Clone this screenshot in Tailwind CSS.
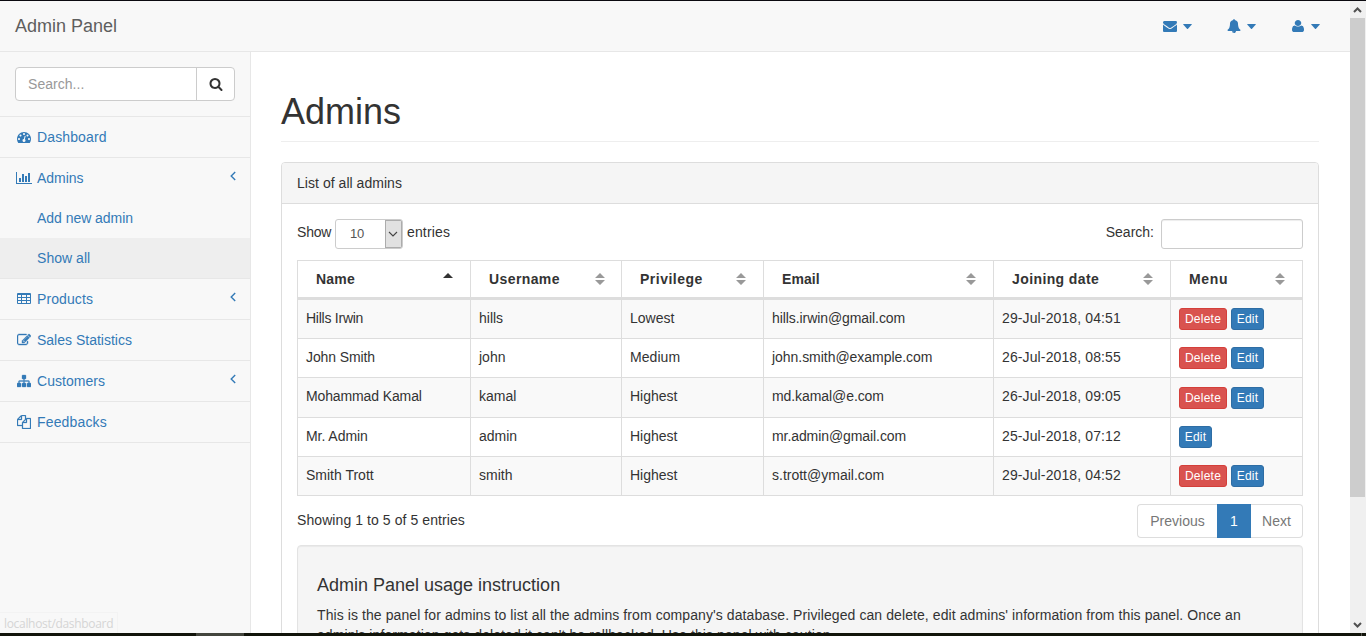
<!DOCTYPE html>
<html lang="en">
<head>
<meta charset="utf-8">
<title>Admin Panel</title>
<script src="https://cdn.jsdelivr.net/npm/@tailwindcss/browser@4"></script>
</head>
<body class="h-[636px] w-[1366px] overflow-hidden bg-white font-['Liberation_Sans',Arial,sans-serif] text-[14px] leading-5 text-[#333]">
<svg class="hidden">
  <symbol id="search" viewBox="0 0 1792 1792"><path d="M1216 832q0-185-131.5-316.5t-316.5-131.5-316.5 131.5-131.5 316.5 131.5 316.5 316.5 131.5 316.5-131.5 131.5-316.5zm512 832q0 52-38 90t-90 38q-54 0-90-38l-343-342q-179 124-399 124-143 0-273.5-55.5t-225-150-150-225-55.5-273.5 55.5-273.5 150-225 225-150 273.5-55.5 273.5 55.5 225 150 150 225 55.5 273.5q0 220-124 399l343 343q37 37 37 90z"/></symbol>
  <symbol id="envelope" viewBox="0 0 1792 1792"><path d="M1792 710v794q0 66-47 113t-113 47h-1472q-66 0-113-47t-47-113v-794q44 49 101 87 362 246 497 345 57 42 92.5 65.5t94.5 48 110 24.5h2q51 0 110-24.5t94.5-48 92.5-65.5q170-123 498-345 57-39 100-87zm0-294q0 79-49 151t-122 123q-376 261-468 325-10 7-42.5 31t-54 38.5-52 32.5-57.5 27-50 9h-2q-23 0-50-9t-57.5-27-52-32.5-54-38.5-42.5-31q-91-64-262-182.5t-205-142.5q-62-42-117-115.5t-55-136.5q0-78 41.5-130t118.5-52h1472q65 0 112.5 47t47.500 113z"/></symbol>
  <symbol id="bell" viewBox="0 0 1792 1792"><path d="M912 1696q0-16-16-16-59 0-101.5-42.5t-42.5-101.5q0-16-16-16t-16 16q0 73 51.5 124.5t124.5 51.5q16 0 16-16zm816-288q0 52-38 90t-90 38h-448q0 106-75 181t-181 75-181-75-75-181h-448q-52 0-90-38t-38-90q50-42 91-88t85-119.5 74.5-158.5 50-206 19.5-260q0-152 117-282.5t307-158.5q-8-19-8-39 0-40 28-68t68-28 68 28 28 68q0 20-8 39 190 28 307 158.5t117 282.5q0 139 19.5 260t50 206 74.5 158.5 85 119.5 91 88z"/></symbol>
  <symbol id="user" viewBox="192 128 1408 1536" preserveAspectRatio="none"><path d="M1600 1405q0 120-73 189.500t-194 69.500h-874q-121 0-194-69.500t-73-189.500q0-53 3.500-103.500t14-109 26.500-108.500 43-97.500 62-81 85.500-53.500 111.500-20q9 0 42 21.500t74.500 48 108 48 133.500 21.500 133.500-21.500 108-48 74.500-48 42-21.500q61 0 111.500 20t85.500 53.500 62 81 43 97.500 26.500 108.500 14 109 3.500 103.500zm-320-893q0 159-112.500 271.500t-271.500 112.500-271.500-112.500-112.500-271.500 112.500-271.500 271.500-112.500 271.500 112.500 112.500 271.500z"/></symbol>
  <symbol id="caret" viewBox="0 0 9 5"><path d="M.5 0h8q.5.2.3.6L5 4.700q-.5.500-1 0L.2.600Q0 .2.500 0z"/></symbol>
  <symbol id="gauge" viewBox="0 0 1792 1792"><path d="M384 1152q0-53-37.5-90.5t-90.5-37.5-90.5 37.5-37.5 90.5 37.5 90.5 90.5 37.5 90.5-37.5 37.5-90.5zm192-448q0-53-37.5-90.5t-90.5-37.5-90.5 37.5-37.5 90.5 37.5 90.5 90.5 37.5 90.5-37.5 37.5-90.5zm428 481l101-382q6-26-7.5-48.5t-38.5-29.5-48 6.5-30 39.5l-101 382q-60 5-107 43.5t-63 98.5q-20 77 20 146t117 89 146-20 89-117q16-60-6-117t-72-91zm660-33q0-53-37.5-90.5t-90.5-37.5-90.5 37.5-37.5 90.5 37.5 90.5 90.5 37.5 90.5-37.5 37.5-90.5zm-640-640q0-53-37.5-90.5t-90.5-37.5-90.5 37.5-37.5 90.5 37.5 90.5 90.5 37.5 90.5-37.5 37.5-90.5zm448 192q0-53-37.5-90.5t-90.5-37.5-90.5 37.5-37.5 90.5 37.5 90.5 90.5 37.5 90.5-37.5 37.5-90.5zm320 448q0 261-141 483-19 29-54 29h-1402q-35 0-54-29-141-221-141-483 0-182 71-348t191-286 286-191 348-71 348 71 286 191 191 286 71 348z"/></symbol>
  <symbol id="chart" viewBox="0 0 2048 1792"><path d="M640 896v512h-256v-512h256zm384-512v1024h-256v-1024h256zm1024 1152v128h-2048v-1536h128v1408h1920zm-640-896v768h-256v-768h256zm384-384v1152h-256v-1152h256z"/></symbol>
  <symbol id="table" viewBox="0 0 14 14"><path fill-rule="evenodd" d="M1 1h12q1 0 1 1v9q0 1-1 1H1q-1 0-1-1V2q0-1 1-1zM1 3v2h3V3zM5 3v2h4V3zM10 3v2h3V3zM1 6v2h3V6zM5 6v2h4V6zM10 6v2h3V6zM1 9v2h3V9zM5 9v2h4V9zM10 9v2h3V9z"/></symbol>
  <symbol id="edit" viewBox="0 0 1792 1792"><path stroke="currentColor" stroke-width="50" d="M888 1184l116-116-152-152-116 116v56h96v96h56zm440-720q-16-16-33 1l-350 350q-17 17-1 33t33-1l350-350q17-17 1-33zm80 594v190q0 119-84.5 203.5t-203.5 84.5h-832q-119 0-203.5-84.5t-84.5-203.5v-832q0-119 84.500-203.500t203.500-84.500h832q63 0 117 25 15 7 18 23 3 17-9 29l-49 49q-14 14-32 8-23-6-45-6h-832q-66 0-113 47t-47 113v832q0 66 47 113t113 47h832q66 0 113-47t47-113v-126q0-13 9-22l64-64q15-15 35-7t20 29zm-96-738l288 288-672 672h-288v-288zm444 132l-92 92-288-288 92-92q28-28 68-28t68 28l152 152q28 28 28 68t-28 68z"/></symbol>
  <symbol id="sitemap" viewBox="0 0 1792 1792"><path stroke="currentColor" stroke-width="40" d="M1792 1248v320q0 40-28 68t-68 28h-320q-40 0-68-28t-28-68v-320q0-40 28-68t68-28h96v-192h-512v192h96q40 0 68 28t28 68v320q0 40-28 68t-68 28h-320q-40 0-68-28t-28-68v-320q0-40 28-68t68-28h96v-192h-512v192h96q40 0 68 28t28 68v320q0 40-28 68t-68 28h-320q-40 0-68-28t-28-68v-320q0-40 28-68t68-28h96v-192q0-52 38-90t90-38h512v-192h-96q-40 0-68-28t-28-68v-320q0-40 28-68t68-28h320q40 0 68 28t28 68v320q0 40-28 68t-68 28h-96v192h512q52 0 90 38t38 90v192h96q40 0 68 28t28 68z"/></symbol>
  <symbol id="files" viewBox="0 0 1792 1792"><path stroke="currentColor" stroke-width="30" d="M1696 384q40 0 68 28t28 68v1216q0 40-28 68t-68 28h-960q-40 0-68-28t-28-68v-288h-544q-40 0-68-28t-28-68v-672q0-40 20-88t48-76l408-408q28-28 76-48t88-20h416q40 0 68 28t28 68v328q68-40 128-40h416zm-544 213l-299 299h299v-299zm-640-384l-299 299h299v-299zm196 647l316-316v-416h-384v416q0 40-28 68t-68 28h-416v640h512v-256q0-40 20-88t48-76zm956 804v-1152h-384v416q0 40-28 68t-68 28h-416v640h896z"/></symbol>
  <symbol id="angle" viewBox="0 0 6 10"><path d="M5.200 1L1.200 5l4 4" fill="none" stroke="currentColor" stroke-width="1.400"/></symbol>
  <symbol id="sort" viewBox="0 0 10 12"><path d="M5 0L10 5H0zM0 7h10L5 12z"/></symbol>
</svg>

<div class="flex h-[633px] overflow-hidden border-t border-[#0b0a10]">
  <div class="flex w-[1350px] flex-col">
    <header class="flex h-[51px] shrink-0 items-center justify-between border-b border-[#e7e7e7] bg-[#f8f8f8] pr-[30px] pl-[15px]">
      <span class="text-[18px] leading-5 text-[#5e5e5e]">Admin Panel</span>
      <nav class="flex gap-[35px] text-[#337ab7]">
        <a class="flex items-center gap-[6px]"><svg class="size-[14px] fill-current"><use href="#envelope"/></svg><svg class="h-[5px] w-[9px] fill-current"><use href="#caret"/></svg></a>
        <a class="flex items-center gap-[6px]"><svg class="size-[14px] fill-current"><use href="#bell"/></svg><svg class="h-[5px] w-[9px] fill-current"><use href="#caret"/></svg></a>
        <a class="flex items-center gap-[7px] pl-px"><svg class="h-3 w-3 fill-current"><use href="#user"/></svg><svg class="h-[5px] w-[9px] fill-current"><use href="#caret"/></svg></a>
      </nav>
    </header>

    <div class="flex min-h-0 flex-1">
      <aside class="relative w-[251px] shrink-0 border-r border-[#e7e7e7] bg-[#f8f8f8] tracking-[0.04px] text-[#337ab7]">
        <div class="flex h-[65px] border-b border-[#e7e7e7] px-[15px] pt-[15px]">
          <div class="flex h-[34px] w-[220px] rounded border border-[#ccc] bg-white">
            <span class="w-[180px] pt-[6px] pl-3 text-[#999]">Search...</span>
            <span class="flex flex-1 items-center border-l border-[#ccc] pl-3"><svg class="size-[14px] fill-[#333]"><use href="#search"/></svg></span>
          </div>
        </div>
        <a class="flex h-[41px] items-center border-b border-[#e7e7e7] pl-[17px] tracking-[0.12px]"><svg class="mr-[6px] size-[14px] fill-current"><use href="#gauge"/></svg>Dashboard</a>
        <div class="border-b border-[#e7e7e7]">
          <a class="flex h-10 items-center pr-[14px] pl-4 tracking-[-0.05px]"><svg class="mr-[5px] h-[14px] w-4 fill-current"><use href="#chart"/></svg>Admins<svg class="mb-[5px] ml-auto h-[10px] w-[6px]"><use href="#angle"/></svg></a>
          <a class="flex h-10 items-center pl-[37px] tracking-[-0.04px]">Add new admin</a>
          <a class="flex h-10 items-center bg-[#eee] pl-[37px]">Show all</a>
        </div>
        <a class="flex h-[41px] items-center border-b border-[#e7e7e7] pr-[14px] pl-[17px] tracking-[0.1px]"><svg class="mr-[6px] size-[14px] fill-current"><use href="#table"/></svg>Products<svg class="mb-[5px] ml-auto h-[10px] w-[6px]"><use href="#angle"/></svg></a>
        <a class="flex h-[41px] items-center border-b border-[#e7e7e7] pl-[17px] tracking-normal"><svg class="mr-[6px] size-[14px] fill-current"><use href="#edit"/></svg>Sales Statistics</a>
        <a class="flex h-[41px] items-center border-b border-[#e7e7e7] pr-[14px] pl-[17px]"><svg class="mr-[6px] size-[14px] fill-current"><use href="#sitemap"/></svg>Customers<svg class="mb-[5px] ml-auto h-[10px] w-[6px]"><use href="#angle"/></svg></a>
        <a class="flex h-[41px] items-center border-b border-[#e7e7e7] pl-[17px] tracking-[0.15px]"><svg class="mr-[6px] size-[14px] fill-current"><use href="#files"/></svg>Feedbacks</a>
        <div class="absolute bottom-0 left-0 h-[21px] w-[118px] border-t border-r border-[#f3f3f3] pl-1 font-['Open_Sans',sans-serif] text-[12px] leading-[22px] tracking-[-0.32px] text-[#d5d5d5]">localhost/dashboard</div>
      </aside>

      <main class="flex-1 pr-[31px] pl-[30px]">
        <h1 class="mt-10 h-[50px] border-b border-[#eee] text-[36px] leading-10">Admins</h1>
        <section class="mt-5 h-[700px] rounded border border-[#ddd]">
          <div class="h-[41px] rounded-t-[3px] border-b border-[#ddd] bg-[#f5f5f5] px-[15px] py-[10px] tracking-[0.04px]">List of all admins</div>
          <div class="px-[15px] pt-[15px]">
            <div class="flex h-[41px] items-start justify-between">
              <label class="flex">
                <span class="w-[38px] pt-[3px] tracking-[-0.2px]">Show</span>
                <span class="flex h-[30px] w-[68px] overflow-hidden rounded-[3px] border border-[#ccc]">
                  <span class="flex-1 pt-1 pl-[14px] text-[13px] tracking-[-0.3px] text-[#555]">10</span>
                  <span class="flex w-[17px] items-center justify-center border border-[#acacac] bg-[#e1e1e1]"><svg class="mr-px h-[6px] w-[10px]" viewBox="0 0 10 6"><path d="M1 1l4 4 4-4" fill="none" stroke="#444" stroke-width="1.100"/></svg></span>
                </span>
                <span class="pt-[3px] pl-1 tracking-[0.15px]">entries</span>
              </label>
              <label class="flex gap-[7px]"><span class="pt-[3px]">Search:</span><span class="h-[30px] w-[142px] rounded-[3px] border border-[#ccc] shadow-[inset_0_1px_1px_rgba(0,0,0,0.075)]"></span></label>
            </div>
            <table class="w-[1006px] table-fixed border-separate border-spacing-0 border-t border-l border-[#ddd] [&_td]:border-r [&_td]:border-b [&_td]:border-[#ddd] [&_td]:px-2 [&_td]:pt-[8px] [&_td]:align-top [&_th]:border-r [&_th]:border-b-[3px] [&_th]:border-[#ddd] [&_th]:p-0">
              <colgroup><col class="w-[173px]"><col class="w-[151px]"><col class="w-[142px]"><col class="w-[230px]"><col class="w-[177px]"><col class="w-[132px]"></colgroup>
              <thead>
                <tr class="h-[39px] text-left tracking-[0.4px]">
                  <th><div class="flex items-center justify-between pr-[17px] pl-[18px] tracking-[0.2px]">Name<svg class="h-[12px] w-[10px]" viewBox="0 0 10 12"><path d="M0 5L5 0l5 5z" fill="#333"/></svg></div></th>
                  <th><div class="flex items-center justify-between pr-[16px] pl-[18px]">Username<svg class="h-3 w-[10px] fill-[#999]"><use href="#sort"/></svg></div></th>
                  <th><div class="flex items-center justify-between pr-[17px] pl-[18px] tracking-[0.5px]">Privilege<svg class="h-3 w-[10px] fill-[#999]"><use href="#sort"/></svg></div></th>
                  <th><div class="flex items-center justify-between pr-[17px] pl-[18px] tracking-[0.1px]">Email<svg class="h-3 w-[10px] fill-[#999]"><use href="#sort"/></svg></div></th>
                  <th><div class="flex items-center justify-between pr-[17px] pl-[18px]">Joining date<svg class="h-3 w-[10px] fill-[#999]"><use href="#sort"/></svg></div></th>
                  <th><div class="flex items-center justify-between pr-[17px] pl-[18px] tracking-[0.7px]">Menu<svg class="h-3 w-[10px] fill-[#999]"><use href="#sort"/></svg></div></th>
                </tr>
              </thead>
              <tbody>
                <tr class="h-[39px] bg-[#f9f9f9]"><td class="tracking-[-0.25px]">Hills Irwin</td><td>hills</td><td>Lowest</td><td class="tracking-[-0.08px]">hills.irwin@gmail.com</td><td class="tracking-[0.12px]">29-Jul-2018, 04:51</td><td><div class="flex gap-1 text-[12px] leading-5 tracking-[0.25px] text-white"><span class="h-[22px] w-12 rounded-[3px] border border-[#d43f3a] bg-[#d9534f] text-center">Delete</span><span class="h-[22px] w-[33px] rounded-[3px] border border-[#2e6da4] bg-[#337ab7] text-center">Edit</span></div></td></tr>
                <tr class="h-[39px]"><td class="tracking-[-0.1px]">John Smith</td><td>john</td><td class="tracking-[0.05px]">Medium</td><td class="tracking-[-0.04px]">john.smith@example.com</td><td class="tracking-[0.12px]">26-Jul-2018, 08:55</td><td><div class="flex gap-1 text-[12px] leading-5 tracking-[0.25px] text-white"><span class="h-[22px] w-12 rounded-[3px] border border-[#d43f3a] bg-[#d9534f] text-center">Delete</span><span class="h-[22px] w-[33px] rounded-[3px] border border-[#2e6da4] bg-[#337ab7] text-center">Edit</span></div></td></tr>
                <tr class="h-10 bg-[#f9f9f9]"><td class="tracking-[-0.12px]">Mohammad Kamal</td><td>kamal</td><td>Highest</td><td class="tracking-[-0.08px]">md.kamal@e.com</td><td class="tracking-[0.12px]">26-Jul-2018, 09:05</td><td><div class="mt-px flex gap-1 text-[12px] leading-5 tracking-[0.25px] text-white"><span class="h-[22px] w-12 rounded-[3px] border border-[#d43f3a] bg-[#d9534f] text-center">Delete</span><span class="h-[22px] w-[33px] rounded-[3px] border border-[#2e6da4] bg-[#337ab7] text-center">Edit</span></div></td></tr>
                <tr class="h-[39px]"><td class="tracking-[-0.05px]">Mr. Admin</td><td>admin</td><td>Highest</td><td class="tracking-[-0.08px]">mr.admin@gmail.com</td><td class="tracking-[0.12px]">25-Jul-2018, 07:12</td><td><div class="flex gap-1 text-[12px] leading-5 tracking-[0.25px] text-white"><span class="h-[22px] w-[33px] rounded-[3px] border border-[#2e6da4] bg-[#337ab7] text-center">Edit</span></div></td></tr>
                <tr class="h-[39px] bg-[#f9f9f9]"><td>Smith Trott</td><td>smith</td><td>Highest</td><td>s.trott@ymail.com</td><td class="tracking-[0.12px]">29-Jul-2018, 04:52</td><td><div class="flex gap-1 text-[12px] leading-5 tracking-[0.25px] text-white"><span class="h-[22px] w-12 rounded-[3px] border border-[#d43f3a] bg-[#d9534f] text-center">Delete</span><span class="h-[22px] w-[33px] rounded-[3px] border border-[#2e6da4] bg-[#337ab7] text-center">Edit</span></div></td></tr>
              </tbody>
            </table>
            <div class="flex h-[49px] items-start justify-between pt-2">
              <span class="pt-[6px] tracking-[0.08px]">Showing 1 to 5 of 5 entries</span>
              <div class="flex h-[34px] w-[166px] text-center leading-8 text-[#777]">
                <span class="w-20 rounded-l border border-r-0 border-[#ddd]">Previous</span>
                <span class="w-[34px] border border-[#337ab7] bg-[#337ab7] text-white">1</span>
                <span class="flex-1 rounded-r border border-l-0 border-[#ddd]">Next</span>
              </div>
            </div>
            <div class="h-[200px] rounded border border-[#e3e3e3] bg-[#f5f5f5] px-[19px] pt-[29px] shadow-[inset_0_1px_1px_rgba(0,0,0,0.05)]">
              <h4 class="text-[18px] leading-5">Admin Panel usage instruction</h4>
              <p class="mt-[10px] whitespace-nowrap tracking-[0.085px]">This is the panel for admins to list all the admins from company's database. Privileged can delete, edit admins' information from this panel. Once an<br>admin's information gets deleted it can't be rollbacked. Use this panel with caution.</p>
            </div>
          </div>
        </section>
      </main>
    </div>
  </div>

  <div class="flex w-4 flex-col items-center bg-[#f0f0f0]">
    <svg class="h-[17px] w-4 shrink-0" viewBox="0 0 16 17"><path d="M4 11l3.500-3.500L11 11" fill="none" stroke="#505050" stroke-width="2"/></svg>
    <div class="h-[479px] w-[15px] shrink-0 self-start bg-[#cdcdcd]"></div>
    <svg class="mt-auto h-[17px] w-4 shrink-0" viewBox="0 0 16 17"><path d="M4 7l3.500 3.500L11 7" fill="none" stroke="#505050" stroke-width="2"/></svg>
  </div>
</div>
<div class="flex h-[3px] bg-[#11140a] pl-[196px]"><div class="h-[3px] w-12 bg-[#43453d]"></div><div class="mr-1 ml-auto h-[3px] w-px bg-[#55564f]"></div></div>
</body>
</html>
